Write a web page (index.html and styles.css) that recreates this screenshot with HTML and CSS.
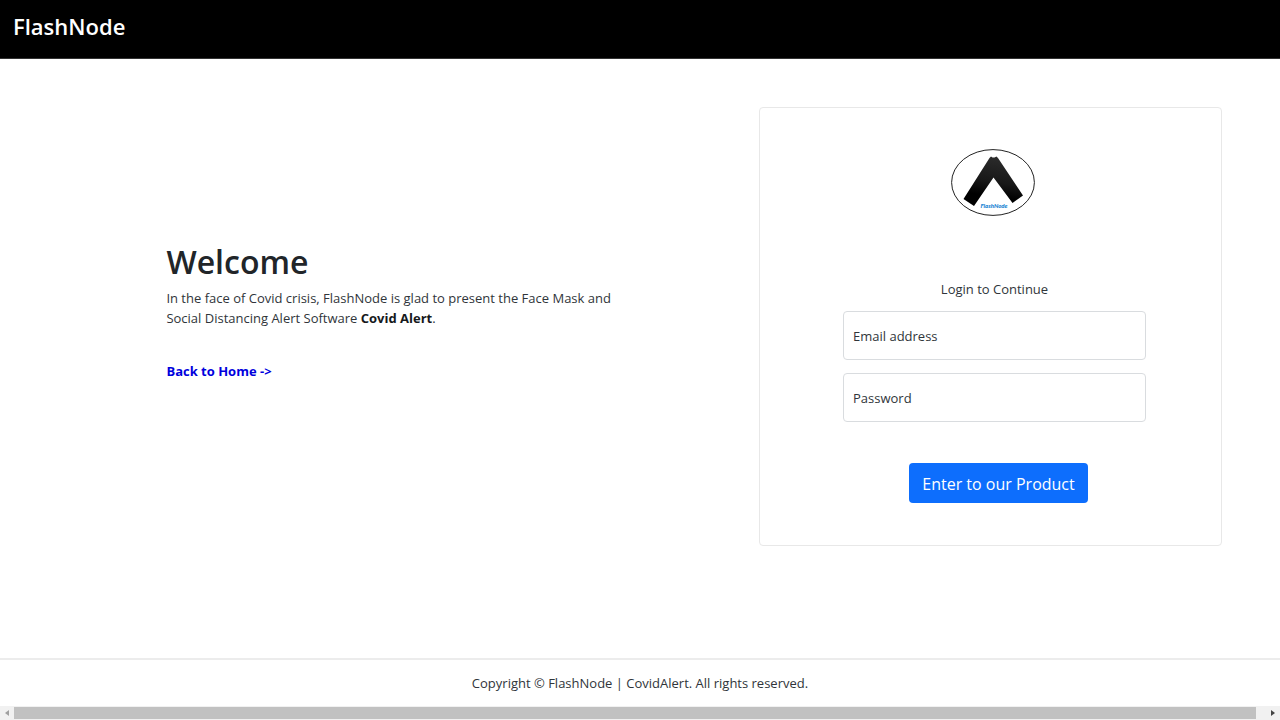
FILE: index.html
```html
<!DOCTYPE html>
<html lang="en">
<head>
<meta charset="utf-8">
<meta name="viewport" content="width=device-width, initial-scale=1">
<title>FlashNode</title>
<link rel="stylesheet" href="styles.css">
</head>
<body>
<header class="navbar"><span class="brand">FlashNode</span></header>
<main class="main">
  <section class="intro">
    <h1 class="title">Welcome</h1>
    <p class="lead">In the face of Covid crisis, FlashNode is glad to present the Face Mask and Social Distancing Alert Software <strong>Covid Alert</strong>.</p>
    <a class="home-link" href="#">Back to Home -&gt;</a>
  </section>
  <section class="card">
    <svg class="logo" viewBox="0 0 84 67" role="img" aria-label="FlashNode logo">
      <defs>
        <linearGradient id="shade" x1="0.6" y1="0" x2="0.4" y2="1">
          <stop offset="0" stop-color="#2c2c2c"/>
          <stop offset="0.5" stop-color="#181818"/>
          <stop offset="0.8" stop-color="#000"/>
        </linearGradient>
      </defs>
      <ellipse cx="42" cy="33.5" rx="41.4" ry="32.9" fill="#fff" stroke="#222" stroke-width="1"/>
      <path d="M12.500 50 L38.500 9 L40 7.500 L41.500 8.500 L43.500 8.500 L45.500 7.500 L47 9 L72 46.500 L61.500 54 L42.500 28.500 L23 57 Z" fill="url(#shade)"/>
      <text class="logo-text" x="43" y="59" text-anchor="middle">FlashNode</text>
    </svg>
    <form class="login">
      <p class="login-title">Login to Continue</p>
      <div class="field">
        <input class="field-input" id="email" type="email">
        <label class="field-label" for="email">Email address</label>
      </div>
      <div class="field">
        <input class="field-input" id="password" type="password">
        <label class="field-label" for="password">Password</label>
      </div>
      <button class="submit" type="submit">Enter to our Product</button>
    </form>
  </section>
</main>
<footer class="footer">Copyright © FlashNode | CovidAlert. All rights reserved.</footer>
<div class="scrollbar" aria-hidden="true">
  <svg class="arrow arrow-left" viewBox="0 0 14 14"><path d="M9 4v6L5 7z"/></svg>
  <div class="thumb"></div>
  <svg class="arrow arrow-right" viewBox="0 0 14 14"><path d="M5 4v6l4-3z"/></svg>
</div>
</body>
</html>
```
FILE: styles.css
```css
* { box-sizing: border-box; }
body {
  margin: 0;
  min-height: 100vh;
  display: flex;
  flex-direction: column;
  background: #fff;
  color: #30353a;
  font-family: "Open Sans", "Noto Sans", sans-serif;
  font-size: 13px;
  line-height: 20px;
}
.navbar {
  background: #000;
  padding: 11px 13px 16px;
  border-bottom: 1px solid #333;
}
.brand {
  display: block;
  color: #fff;
  font-size: 22px;
  font-weight: 600;
  line-height: 31px;
}
.main {
  flex: 1;
  display: grid;
  grid-template-columns: 450px 463px;
  justify-content: space-between;
  align-content: start;
  padding: 48px 58px 48px 13%;
}
.intro { padding-top: 135px; }
.title {
  margin: 0 0 6px;
  color: #212529;
  font-size: 32px;
  font-weight: 600;
  line-height: 40px;
}
.lead { margin: 0 0 33px; }
.lead strong { color: #16191c; }
.home-link {
  color: #00d;
  font-weight: 700;
  text-decoration: none;
}
.card {
  display: flex;
  flex-direction: column;
  align-items: center;
  border: 1px solid #e8e8e8;
  border-radius: 4px;
  padding: 41px 75px 42px 83px;
}
.logo { width: 84px; height: 67px; margin-right: 4px; }
.logo-text {
  font-family: "Lato", sans-serif;
  font-size: 6px;
  font-weight: 900;
  font-style: italic;
  fill: #1482d2;
}
.login {
  width: 100%;
  display: flex;
  flex-direction: column;
  align-items: center;
  padding-top: 63px;
}
.login-title { margin: 0 0 12px; }
.field {
  display: grid;
  width: 100%;
  margin-bottom: 13px;
}
.field-input,
.field-label { grid-area: 1 / 1; }
.field-input {
  width: 100%;
  height: 49px;
  padding: 0 10px;
  border: 1px solid #d9dcdf;
  border-radius: 4px;
  background: #fff;
  color: #212529;
  font: inherit;
}
.field-label {
  align-self: center;
  justify-self: start;
  padding: 0 10px;
  pointer-events: none;
}
.field-input:focus + .field-label { visibility: hidden; }
.submit {
  margin: 28px 0 0 8px;
  padding: 5px 13px 3px;
  border: 0;
  border-radius: 4px;
  background: #0d6efd;
  color: #fff;
  font: inherit;
  font-size: 16px;
  line-height: 32px;
}
.footer {
  border-top: 2px solid #ececec;
  padding: 13px 16px;
  text-align: center;
}
.scrollbar {
  display: flex;
  height: 14px;
  background: #f1f1f1;
}
.arrow { width: 14px; height: 14px; fill: #a0a0a0; }
.arrow-right { margin-left: 10px; fill: #444; }
.thumb { flex: 1; margin: 1px 0; background: #c1c1c1; }
```
